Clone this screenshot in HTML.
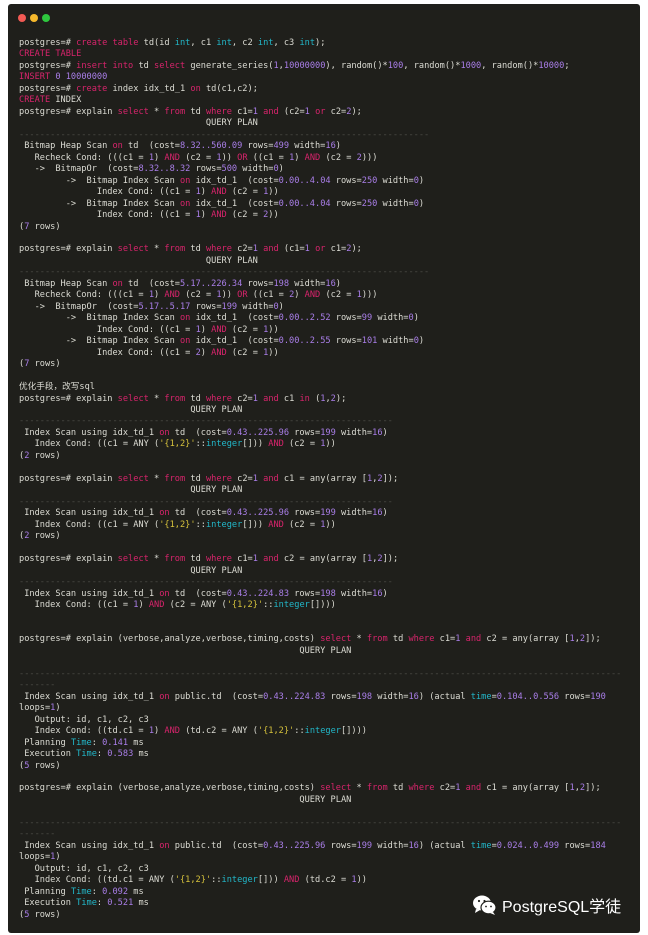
<!DOCTYPE html>
<html><head><meta charset="utf-8"><style>
html,body{margin:0;padding:0;background:#fff;width:648px;height:935px;overflow:hidden}
.win{position:absolute;left:8px;top:4px;width:632px;height:929px;background:#1f1f1b;border-radius:3px}
.dot{position:absolute;top:10px;width:8px;height:8px;border-radius:50%}
pre{position:absolute;left:19px;top:38px;margin:0;font-family:"DejaVu Sans Mono","Noto Sans CJK SC",monospace;font-size:8.65px;line-height:11.47px;color:#dcdcd4;white-space:pre}
.k{color:#d8246c}.n{color:#a97ee8}.t{color:#22b8ca}.s{color:#d6c23c}.d{color:#4c4c46}
.wm{position:absolute;left:472px;top:893px;color:#fff;font-family:"Liberation Sans","Noto Sans CJK SC",sans-serif;font-size:16px;display:flex;align-items:center;gap:4px}
</style></head><body>
<div class="win">
<div class="dot" style="left:10px;background:#f25a54"></div>
<div class="dot" style="left:22px;background:#f5b82c"></div>
<div class="dot" style="left:34px;background:#2ec73e"></div>
</div>
<pre>postgres=# <span class="k">create table</span> td(id <span class="t">int</span>, c1 <span class="t">int</span>, c2 <span class="t">int</span>, c3 <span class="t">int</span>);
<span class="k">CREATE TABLE</span>
postgres=# <span class="k">insert into</span> td <span class="k">select</span> generate_series(<span class="n">1</span>,<span class="n">10000000</span>), random()*<span class="n">100</span>, random()*<span class="n">1000</span>, random()*<span class="n">10000</span>;
<span class="k">INSERT</span> <span class="n">0 10000000</span>
postgres=# <span class="k">create</span> index idx_td_1 <span class="k">on</span> td(c1,c2);
<span class="k">CREATE</span> INDEX
postgres=# explain <span class="k">select</span> * <span class="k">from</span> td <span class="k">where</span> c1=<span class="n">1</span> <span class="k">and</span> (c2=<span class="n">1</span> <span class="k">or</span> c2=<span class="n">2</span>);
                                    QUERY PLAN
<span class="d">-------------------------------------------------------------------------------</span>
 Bitmap Heap Scan <span class="k">on</span> td  (cost=<span class="n">8.32..560.09</span> rows=<span class="n">499</span> width=<span class="n">16</span>)
   Recheck Cond: (((c1 = <span class="n">1</span>) <span class="k">AND</span> (c2 = <span class="n">1</span>)) <span class="k">OR</span> ((c1 = <span class="n">1</span>) <span class="k">AND</span> (c2 = <span class="n">2</span>)))
   -&gt;  BitmapOr  (cost=<span class="n">8.32..8.32</span> rows=<span class="n">500</span> width=<span class="n">0</span>)
         -&gt;  Bitmap Index Scan <span class="k">on</span> idx_td_1  (cost=<span class="n">0.00..4.04</span> rows=<span class="n">250</span> width=<span class="n">0</span>)
               Index Cond: ((c1 = <span class="n">1</span>) <span class="k">AND</span> (c2 = <span class="n">1</span>))
         -&gt;  Bitmap Index Scan <span class="k">on</span> idx_td_1  (cost=<span class="n">0.00..4.04</span> rows=<span class="n">250</span> width=<span class="n">0</span>)
               Index Cond: ((c1 = <span class="n">1</span>) <span class="k">AND</span> (c2 = <span class="n">2</span>))
(<span class="n">7</span> rows)

postgres=# explain <span class="k">select</span> * <span class="k">from</span> td <span class="k">where</span> c2=<span class="n">1</span> <span class="k">and</span> (c1=<span class="n">1</span> <span class="k">or</span> c1=<span class="n">2</span>);
                                    QUERY PLAN
<span class="d">-------------------------------------------------------------------------------</span>
 Bitmap Heap Scan <span class="k">on</span> td  (cost=<span class="n">5.17..226.34</span> rows=<span class="n">198</span> width=<span class="n">16</span>)
   Recheck Cond: (((c1 = <span class="n">1</span>) <span class="k">AND</span> (c2 = <span class="n">1</span>)) <span class="k">OR</span> ((c1 = <span class="n">2</span>) <span class="k">AND</span> (c2 = <span class="n">1</span>)))
   -&gt;  BitmapOr  (cost=<span class="n">5.17..5.17</span> rows=<span class="n">199</span> width=<span class="n">0</span>)
         -&gt;  Bitmap Index Scan <span class="k">on</span> idx_td_1  (cost=<span class="n">0.00..2.52</span> rows=<span class="n">99</span> width=<span class="n">0</span>)
               Index Cond: ((c1 = <span class="n">1</span>) <span class="k">AND</span> (c2 = <span class="n">1</span>))
         -&gt;  Bitmap Index Scan <span class="k">on</span> idx_td_1  (cost=<span class="n">0.00..2.55</span> rows=<span class="n">101</span> width=<span class="n">0</span>)
               Index Cond: ((c1 = <span class="n">2</span>) <span class="k">AND</span> (c2 = <span class="n">1</span>))
(<span class="n">7</span> rows)

优化手段，改写sql
postgres=# explain <span class="k">select</span> * <span class="k">from</span> td <span class="k">where</span> c2=<span class="n">1</span> <span class="k">and</span> c1 <span class="k">in</span> (<span class="n">1</span>,<span class="n">2</span>);
                                 QUERY PLAN
<span class="d">------------------------------------------------------------------------</span>
 Index Scan using idx_td_1 <span class="k">on</span> td  (cost=<span class="n">0.43..225.96</span> rows=<span class="n">199</span> width=<span class="n">16</span>)
   Index Cond: ((c1 = ANY (<span class="s">'{1,2}'</span>::<span class="t">integer</span>[])) <span class="k">AND</span> (c2 = <span class="n">1</span>))
(<span class="n">2</span> rows)

postgres=# explain <span class="k">select</span> * <span class="k">from</span> td <span class="k">where</span> c2=<span class="n">1</span> <span class="k">and</span> c1 = any(array [<span class="n">1</span>,<span class="n">2</span>]);
                                 QUERY PLAN
<span class="d">------------------------------------------------------------------------</span>
 Index Scan using idx_td_1 <span class="k">on</span> td  (cost=<span class="n">0.43..225.96</span> rows=<span class="n">199</span> width=<span class="n">16</span>)
   Index Cond: ((c1 = ANY (<span class="s">'{1,2}'</span>::<span class="t">integer</span>[])) <span class="k">AND</span> (c2 = <span class="n">1</span>))
(<span class="n">2</span> rows)

postgres=# explain <span class="k">select</span> * <span class="k">from</span> td <span class="k">where</span> c1=<span class="n">1</span> <span class="k">and</span> c2 = any(array [<span class="n">1</span>,<span class="n">2</span>]);
                                 QUERY PLAN
<span class="d">------------------------------------------------------------------------</span>
 Index Scan using idx_td_1 <span class="k">on</span> td  (cost=<span class="n">0.43..224.83</span> rows=<span class="n">198</span> width=<span class="n">16</span>)
   Index Cond: ((c1 = <span class="n">1</span>) <span class="k">AND</span> (c2 = ANY (<span class="s">'{1,2}'</span>::<span class="t">integer</span>[])))


postgres=# explain (verbose,analyze,verbose,timing,costs) <span class="k">select</span> * <span class="k">from</span> td <span class="k">where</span> c1=<span class="n">1</span> <span class="k">and</span> c2 = any(array [<span class="n">1</span>,<span class="n">2</span>]);
                                                      QUERY PLAN

<span class="d">--------------------------------------------------------------------------------------------------------------------</span>
<span class="d">-------</span>
 Index Scan using idx_td_1 <span class="k">on</span> public.td  (cost=<span class="n">0.43..224.83</span> rows=<span class="n">198</span> width=<span class="n">16</span>) (actual <span class="t">time</span>=<span class="n">0.104..0.556</span> rows=<span class="n">190</span>
loops=<span class="n">1</span>)
   Output: id, c1, c2, c3
   Index Cond: ((td.c1 = <span class="n">1</span>) <span class="k">AND</span> (td.c2 = ANY (<span class="s">'{1,2}'</span>::<span class="t">integer</span>[])))
 Planning <span class="t">Time</span>: <span class="n">0.141</span> ms
 Execution <span class="t">Time</span>: <span class="n">0.583</span> ms
(<span class="n">5</span> rows)

postgres=# explain (verbose,analyze,verbose,timing,costs) <span class="k">select</span> * <span class="k">from</span> td <span class="k">where</span> c2=<span class="n">1</span> <span class="k">and</span> c1 = any(array [<span class="n">1</span>,<span class="n">2</span>]);
                                                      QUERY PLAN

<span class="d">--------------------------------------------------------------------------------------------------------------------</span>
<span class="d">-------</span>
 Index Scan using idx_td_1 <span class="k">on</span> public.td  (cost=<span class="n">0.43..225.96</span> rows=<span class="n">199</span> width=<span class="n">16</span>) (actual <span class="t">time</span>=<span class="n">0.024..0.499</span> rows=<span class="n">184</span>
loops=<span class="n">1</span>)
   Output: id, c1, c2, c3
   Index Cond: ((td.c1 = ANY (<span class="s">'{1,2}'</span>::<span class="t">integer</span>[])) <span class="k">AND</span> (td.c2 = <span class="n">1</span>))
 Planning <span class="t">Time</span>: <span class="n">0.092</span> ms
 Execution <span class="t">Time</span>: <span class="n">0.521</span> ms
(<span class="n">5</span> rows)</pre>
<div class="wm"><svg width="26" height="22" viewBox="0 0 26 22"><ellipse cx="10" cy="9" rx="9" ry="7.5" fill="#fff"/><path d="M4 15 L3 19 L8 16Z" fill="#fff"/><ellipse cx="16.5" cy="13.5" rx="7.5" ry="6.3" fill="#fff" stroke="#1f1f1b" stroke-width="1.2"/><path d="M21 18 L23 21 L18 19Z" fill="#fff"/><circle cx="7" cy="7" r="1.1" fill="#1f1f1b"/><circle cx="12.5" cy="7" r="1.1" fill="#1f1f1b"/><circle cx="14" cy="12.5" r="0.9" fill="#1f1f1b"/><circle cx="19" cy="12.5" r="0.9" fill="#1f1f1b"/></svg><span>PostgreSQL学徒</span></div>
</body></html>
